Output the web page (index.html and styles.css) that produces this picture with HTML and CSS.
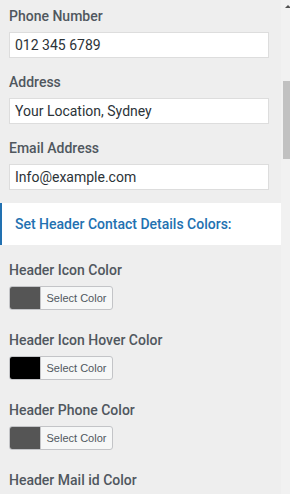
FILE: index.html
```html
<!DOCTYPE html>
<html lang="en">
<head>
    <meta charset="UTF-8">
    <meta name="viewport" content="width=device-width, initial-scale=1.0">
    <title>Header Contact Details</title>
    <link rel="stylesheet" href="styles.css">
</head>
<body>

<div class="panel">
    <div class="field">
        <label class="field-label">Phone Number</label>
        <input class="text-input" type="text" value="012 345 6789" />
    </div>
    <div class="field">
        <label class="field-label">Address</label>
        <input class="text-input" type="text" value="Your Location, Sydney" />
    </div>
    <div class="field">
        <label class="field-label">Email Address</label>
        <input class="text-input" type="text" value="Info@example.com" />
    </div>

    <!-- Section heading -->
    <div class="section-title">Set Header Contact Details Colors:</div>

    <div class="color-field">
        <label class="field-label">Header Icon Color</label>
        <button class="color-btn"><span class="swatch swatch-grey"></span><span class="color-text">Select Color</span></button>
    </div>
    <div class="color-field">
        <label class="field-label">Header Icon Hover Color</label>
        <button class="color-btn"><span class="swatch swatch-black"></span><span class="color-text">Select Color</span></button>
    </div>
    <div class="color-field">
        <label class="field-label">Header Phone Color</label>
        <button class="color-btn"><span class="swatch swatch-grey"></span><span class="color-text">Select Color</span></button>
    </div>
    <div class="color-field">
        <label class="field-label">Header Mail id Color</label>
    </div>
</div>

<!-- Fake scrollbar -->
<div class="scrollbar">
    <div class="scroll-arrow"></div>
    <div class="scroll-thumb"></div>
</div>

</body>
</html>
```

FILE: styles.css
```css
body {
    font-family: Roboto, "Liberation Sans", Arial, sans-serif;
    background-color: #eeeeee;
    margin: 0;
    display: flex;
    height: 494px;
    overflow: hidden;
}
.panel {
    flex: 1;
    padding: 6px 12px 0 0;
}
.field {
    padding-left: 9px;
    margin-bottom: 14px;
}
.field:nth-child(3) {
    margin-bottom: 13px;
}
.field-label {
    display: block;
    font-size: 14px;
    font-weight: 500;
    line-height: 20px;
    color: #50575e;
    margin-bottom: 6px;
}
.text-input {
    box-sizing: border-box;
    width: 100%;
    height: 26px;
    padding: 0 5px;
    font-family: inherit;
    font-size: 14px;
    color: #2c3338;
    background: #fff;
    border: 1px solid #dddddd;
    border-radius: 0;
    outline: none;
}
.section-title {
    margin-right: -12px;
    height: 42px;
    box-sizing: border-box;
    background: #fff;
    border-left: 2px solid #2271b1;
    padding-left: 13px;
    display: flex;
    align-items: center;
    font-size: 14px;
    font-weight: 500;
    color: #2271b1;
    margin-bottom: 15px;
}
.color-field {
    padding-left: 9px;
    margin-bottom: 20px;
}
.color-btn {
    display: flex;
    align-items: stretch;
    width: 104px;
    height: 24px;
    padding: 0;
    border: 1px solid #c3c4c7;
    border-radius: 3px;
    background: #f6f7f7;
    overflow: hidden;
    cursor: pointer;
}
.swatch {
    width: 30px;
    border-right: 1px solid #c3c4c7;
}
.swatch-grey { background: #555555; }
.swatch-black { background: #000000; }
.color-text {
    flex: 1;
    display: flex;
    align-items: center;
    justify-content: center;
    font-family: inherit;
    font-size: 11px;
    color: #50575e;
}
.scrollbar {
    width: 9px;
    background: #f1f1f1;
    position: relative;
}
.scroll-arrow {
    position: absolute;
    top: 5px;
    left: 4px;
    width: 0;
    height: 0;
    border-left: 3px solid transparent;
    border-right: 3px solid transparent;
    border-bottom: 3px solid #505050;
}
.scroll-thumb {
    position: absolute;
    top: 81px;
    left: 2px;
    right: 0;
    height: 78px;
    background: #c1c1c1;
}
```
